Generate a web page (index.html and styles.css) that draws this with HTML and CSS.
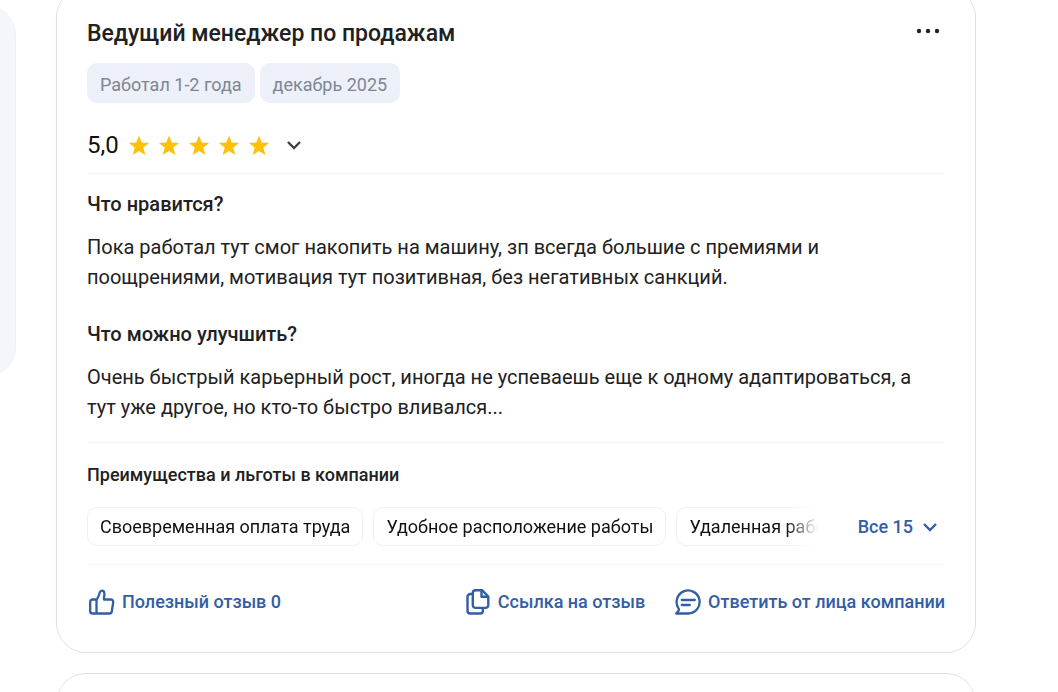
FILE: index.html
```html
<!DOCTYPE html>
<html lang="ru">
<head>
    <meta charset="UTF-8">
    <meta name="viewport" content="width=device-width, initial-scale=1.0">
    <title>Отзывы о работе</title>
    <link rel="stylesheet" href="styles.css">
</head>
<body>
    <div class="page">
        <aside class="sidebar"></aside>
        <main class="reviews">
            <article class="review">
                <header class="review-header">
                    <h2>Ведущий менеджер по продажам</h2>
                    <button type="button" class="more" aria-label="Ещё">
                        <svg width="24" height="6" viewBox="0 0 24 6" fill="currentColor">
                            <circle cx="3" cy="3" r="2.2"/>
                            <circle cx="12" cy="3" r="2.2"/>
                            <circle cx="21" cy="3" r="2.2"/>
                        </svg>
                    </button>
                </header>
                <div class="tags">
                    <span class="tag">Работал 1-2 года</span>
                    <span class="tag">декабрь 2025</span>
                </div>

                <div class="rating">
                    <span class="rating-value">5,0</span>
                    <svg class="stars" width="142" height="22" viewBox="0 0 142 22" fill="#ffc107">
                        <defs>
                            <path id="star" d="M11 1.500l2.700 7.100 7.400.3-5.800 4.700 2 7.400L11 16.900 4.700 21l2-7.400L.9 8.900l7.400-.3z"/>
                        </defs>
                        <use href="#star"/>
                        <use href="#star" x="30"/>
                        <use href="#star" x="60"/>
                        <use href="#star" x="90"/>
                        <use href="#star" x="120"/>
                    </svg>
                    <button type="button" class="rating-toggle" aria-label="Показать оценки">
                        <svg width="16" height="10" viewBox="0 0 16 10" fill="none" stroke="currentColor" stroke-width="2.4">
                            <path d="M2 2l6 6 6-6"/>
                        </svg>
                    </button>
                </div>

                <section class="answers">
                    <h3>Что нравится?</h3>
                    <p>Пока работал тут смог накопить на машину, зп всегда большие с премиями и поощрениями, мотивация тут позитивная, без негативных санкций.</p>
                    <h3>Что можно улучшить?</h3>
                    <p>Очень быстрый карьерный рост, иногда не успеваешь еще к одному адаптироваться, а тут уже другое, но кто-то быстро вливался...</p>
                </section>

                <section class="benefits">
                    <h4>Преимущества и льготы в компании</h4>
                    <div class="benefits-row">
                        <ul class="benefits-list">
                            <li>Своевременная оплата труда</li>
                            <li>Удобное расположение работы</li>
                            <li>Удаленная работа</li>
                        </ul>
                        <button type="button" class="link-button show-all">
                            Все 15
                            <svg width="16" height="10" viewBox="0 0 16 10" fill="none" stroke="currentColor" stroke-width="2.4">
                                <path d="M2 2l6 6 6-6"/>
                            </svg>
                        </button>
                    </div>
                </section>

                <footer class="actions">
                    <button type="button" class="link-button useful">
                        <svg width="28" height="28" viewBox="0 0 28 28" fill="none" stroke="currentColor" stroke-width="2.3" stroke-linejoin="round">
                            <path d="M9.500 11.500H5.500A2.300 2.300 0 0 0 3.200 13.800v9.400a2.300 2.300 0 0 0 2.300 2.300h17a2.300 2.300 0 0 0 2.300-2l1.400-9.400a2.300 2.300 0 0 0-2.300-2.600h-6.900c-.6-1.200.5-3 .4-5.500 0-1.900-1-3.300-2.500-3.300-1.200 0-1.700.7-2.100 1.800-.8 2.400-1.300 5-3.300 7z"/>
                            <path d="M9.500 11.500v14"/>
                        </svg>
                        Полезный отзыв 0
                    </button>
                    <button type="button" class="link-button">
                        <svg width="28" height="28" viewBox="0 0 28 28" fill="none" stroke="currentColor" stroke-width="2.400" stroke-linejoin="round">
                            <path d="M12.500 2.200h6.500l6.300 6.300v8.700a2.700 2.700 0 0 1-2.700 2.700H12.500a2.700 2.700 0 0 1-2.700-2.700V4.900a2.700 2.700 0 0 1 2.700-2.700z"/>
                            <path d="M18.500 2.500v6.300h6.500"/>
                            <path d="M9.800 6H7.200a2.700 2.700 0 0 0-2.700 2.700V22.800a2.700 2.700 0 0 0 2.700 2.700h10a2.700 2.700 0 0 0 2.700-2.700v-2.500"/>
                        </svg>
                        Ссылка на отзыв
                    </button>
                    <button type="button" class="link-button">
                        <svg width="28" height="28" viewBox="0 0 28 28" fill="none" stroke="currentColor" stroke-width="2.300" stroke-linejoin="round" stroke-linecap="round">
                            <path d="M3.200 25.500h12A11.500 11.500 0 1 0 5.500 20.300c.7 1 .5 2-.2 2.800z"/>
                            <path d="M8.800 12h13M8.800 17h8"/>
                        </svg>
                        Ответить от лица компании
                    </button>
                </footer>
            </article>
            <article class="review"></article>
        </main>
    </div>
</body>
</html>
```
FILE: styles.css
```css
* {
    box-sizing: border-box;
}

body {
    margin: 0;
    height: 100vh;
    overflow: hidden;
    background-color: #fff;
    color: #212121;
    font-family: Roboto, "Liberation Sans", sans-serif;
    font-size: 20px;
    line-height: 30px;
}

h2, h3, h4, p, ul {
    margin: 0;
    padding: 0;
    font-weight: 500;
}

button {
    padding: 0;
    border: none;
    background: none;
    color: inherit;
    font: inherit;
    cursor: pointer;
}

svg {
    display: block;
    flex-shrink: 0;
}

.page {
    display: flex;
    align-items: flex-start;
    gap: 40px;
    padding-right: 82px;
}

/* only the right edge of the side panel stays in view */
.sidebar {
    flex: 0 0 80px;
    height: 372px;
    margin: 5px 0 0 -64px;
    background-color: #f4f6fb;
    border-right: 1px solid #edf0f7;
    border-radius: 30px;
}

/* the list is scrolled a little past its top edge */
.reviews {
    flex: 1;
    min-width: 0;
    display: flex;
    flex-direction: column;
    gap: 20px;
    margin-top: -13px;
}

.review {
    padding: 30px;
    border: 1px solid #dce1eb;
    border-radius: 30px;
    min-height: 40px;
}

.review-header {
    display: flex;
    justify-content: space-between;
    align-items: center;
}

.review-header h2 {
    font-size: 23px;
    line-height: 32px;
}

.more {
    height: 26px;
    margin-right: 5px;
    align-self: flex-start;
}

.tags {
    display: flex;
    gap: 5px;
    margin-top: 13px;
}

.tag {
    padding: 7px 13px 3px;
    border-radius: 10px;
    background-color: #edf0f8;
    color: #7c8794;
    font-size: 18px;
}

.rating {
    display: flex;
    align-items: center;
    margin-top: 26px;
    padding-bottom: 12px;
    border-bottom: 1px solid #f3f4f8;
}

.rating-value {
    font-size: 24px;
    line-height: 32px;
    color: #111;
}

.stars {
    margin-left: 9px;
}

.rating-toggle {
    margin-left: 16px;
    color: #424242;
}

.answers {
    padding: 15px 0 20px;
    border-bottom: 1px solid #f3f4f8;
}

.answers h3 {
    font-size: 20px;
    margin-bottom: 13px;
}

.answers p {
    padding-right: 12px;
    font-weight: 400;
}

.answers p + h3 {
    margin-top: 27px;
}

.benefits {
    padding: 17px 0 18px;
    border-bottom: 1px solid #f3f4f8;
}

.benefits h4 {
    font-size: 18px;
}

.benefits-row {
    display: flex;
    justify-content: space-between;
    align-items: center;
    gap: 40px;
    margin-top: 17px;
}

.benefits-list {
    display: flex;
    flex: 1;
    gap: 10px;
    min-width: 0;
    overflow: hidden;
    list-style: none;
    mask-image: linear-gradient(to right, #000 calc(100% - 32px), transparent);
}

.benefits-list li {
    padding: 5px 12px 4px;
    border: 1px solid #edf0f7;
    border-radius: 10px;
    color: #111;
    font-size: 18px;
    font-weight: 400;
    line-height: 28px;
    white-space: nowrap;
}

.link-button {
    display: flex;
    align-items: center;
    gap: 7px;
    color: #315ea6;
    font-size: 18px;
    font-weight: 500;
    white-space: nowrap;
}

.show-all {
    gap: 9px;
    margin-right: 7px;
}

.actions {
    display: flex;
    gap: 28px;
    padding: 22px 0 5px;
}

.useful {
    margin-right: auto;
}
```
